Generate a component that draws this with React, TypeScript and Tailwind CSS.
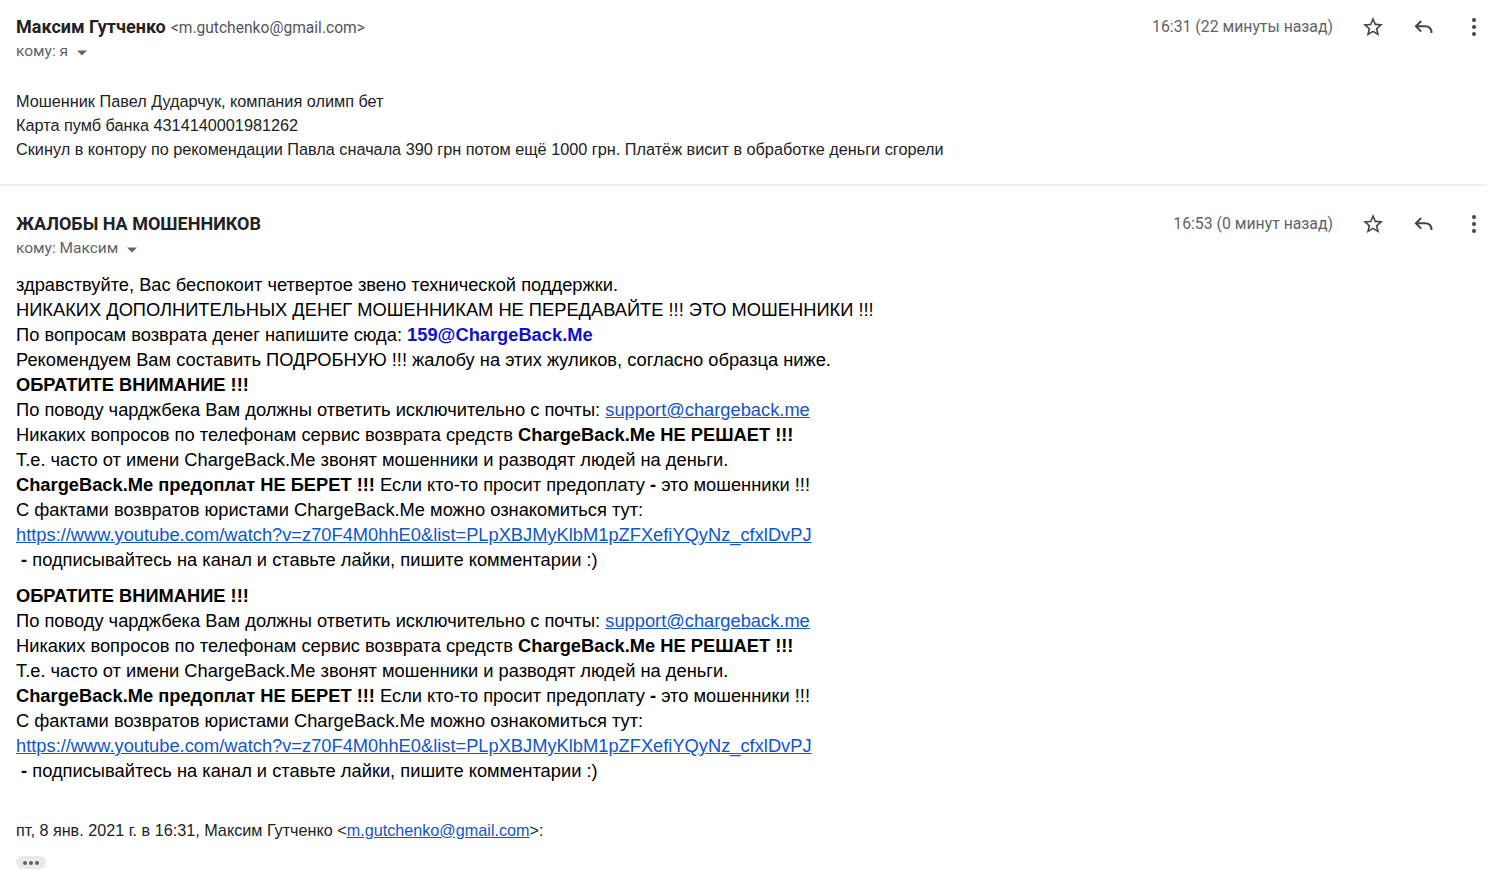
import React from "react";

const Star = () => (
  <svg width="24" height="24" viewBox="0 0 24 24" fill="#444">
    <path d="M22 9.24l-7.19-.62L12 2 9.19 8.63 2 9.24l5.46 4.73L5.82 21 12 17.27 18.18 21l-1.63-7.03L22 9.24zM12 15.4l-3.76 2.27 1-4.28-3.32-2.88 4.38-.38L12 6.1l1.71 4.04 4.38.38-3.32 2.88 1 4.28L12 15.4z" />
  </svg>
);
const Reply = () => (
  <svg width="24" height="24" viewBox="0 0 24 24">
    <path d="M4 11.3h9c4 0 6.5 2.6 6.5 6.7" fill="none" stroke="#444" strokeWidth="2" />
    <path d="M9.2 6l-5.3 5.3 5.3 5.3" fill="none" stroke="#444" strokeWidth="2" />
  </svg>
);
const More = () => (
  <svg width="24" height="24" viewBox="0 0 24 24" fill="#444">
    <circle cx="12" cy="5" r="2" />
    <circle cx="12" cy="12" r="2" />
    <circle cx="12" cy="19" r="2" />
  </svg>
);

const Caret = () => (
  <svg width="10" height="6" viewBox="0 0 10 5" className="ml-[9px] mt-[1px]">
    <path d="M0 0l5 5 5-5z" fill="#666" />
  </svg>
);

const Header = ({ name, email, to, time }: { name: string; email?: string; to: string; time: string }) => (
  <div className="flex items-start">
    <div className="flex-1">
      <div className="flex items-baseline h-[24px] leading-[24px]">
        <span className="text-[18px] font-bold text-[#222]">{name}</span>
        {email && <span className="ml-[5px] text-[15.6px] text-[#555]">{email}</span>}
      </div>
      <div className="flex items-center h-[24px] text-[15.5px] text-[#5f6368] mt-[1px]">
        <span>{to}</span>
        <Caret />
      </div>
    </div>
    <div className="flex items-center h-[24px]">
      <span className="text-[15.8px] text-[#5f6368] mr-[13px]">{time}</span>
      <div className="w-[51px] flex justify-center pl-[2px]"><Star /></div>
      <div className="w-[51px] flex justify-center pl-[2px]"><Reply /></div>
      <div className="w-[51px] flex justify-center"><More /></div>
    </div>
  </div>
);

const Lnk = ({ children }: { children: React.ReactNode }) => (
  <a className="text-[#15c] underline" href="#">{children}</a>
);

const Warn = () => (
  <div>
    <div className="font-bold">ОБРАТИТЕ ВНИМАНИЕ !!!</div>
    <div>По поводу чарджбека Вам должны ответить исключительно с почты: <Lnk>support@chargeback.me</Lnk></div>
    <div>Никаких вопросов по телефонам сервис возврата средств <b>ChargeBack.Me НЕ РЕШАЕТ !!!</b></div>
    <div>Т.е. часто от имени ChargeBack.Me звонят мошенники и разводят людей на деньги.</div>
    <div><b>ChargeBack.Me предоплат НЕ БЕРЕТ !!!</b> Если кто-то просит предоплату <b>-</b> это мошенники !!!</div>
    <div>С фактами возвратов юристами ChargeBack.Me можно ознакомиться тут:</div>
    <div><Lnk>https://www.youtube.com/watch?v=z70F4M0hhE0&amp;list=PLpXBJMyKlbM1pZFXefiYQyNz_cfxlDvPJ</Lnk></div>
    <div>&nbsp;<b>-</b> подписывайтесь на канал и ставьте лайки, пишите комментарии :)</div>
  </div>
);

export default function App() {
  return (
    <div className="w-[1503px] h-[887px] bg-white overflow-hidden" style={{ fontFamily: "Roboto, 'Liberation Sans', sans-serif" }}>
      <div className="pl-[16px] pr-[4px] pt-[15px]">
        <Header name="Максим Гутченко" email="<m.gutchenko@gmail.com>" to="кому: я" time="16:31 (22 минуты назад)" />
        <div className="mt-[25px] text-[16.25px] leading-[24px] text-[#222]" style={{ fontFamily: "'Liberation Sans', Arial, sans-serif" }}>
          <div>Мошенник Павел Дударчук, компания олимп бет</div>
          <div>Карта пумб банка 4314140001981262</div>
          <div>Скинул в контору по рекомендации Павла сначала 390 грн потом ещё 1000 грн. Платёж висит в обработке деньги сгорели</div>
        </div>
      </div>
      <div className="mt-[23px] mr-[16px] border-t-[2px] border-[#efefef]" />
      <div className="pl-[16px] pr-[4px] pt-[26px]">
        <Header name="ЖАЛОБЫ НА МОШЕННИКОВ" to="кому: Максим" time="16:53 (0 минут назад)" />
        <div className="mt-[11px] text-[18.3px] leading-[25px] text-black" style={{ fontFamily: "'Liberation Sans', Arial, sans-serif" }}>
          <div>здравствуйте, Вас беспокоит четвертое звено технической поддержки.</div>
          <div>НИКАКИХ ДОПОЛНИТЕЛЬНЫХ ДЕНЕГ МОШЕННИКАМ НЕ ПЕРЕДАВАЙТЕ !!! ЭТО МОШЕННИКИ !!!</div>
          <div>По вопросам возврата денег напишите сюда: <b className="text-[#1010cc]">159@ChargeBack.Me</b></div>
          <div>Рекомендуем Вам составить ПОДРОБНУЮ !!! жалобу на этих жуликов, согласно образца ниже.</div>
          <Warn />
          <div className="h-[11px]" />
          <Warn />
        </div>
        <div className="mt-[35px] text-[16.2px] leading-[24px] text-[#222]" style={{ fontFamily: "'Liberation Sans', Arial, sans-serif" }}>
          пт, 8 янв. 2021 г. в 16:31, Максим Гутченко &lt;<Lnk>m.gutchenko@gmail.com</Lnk>&gt;:
        </div>
        <div className="mt-[14px] w-[30px] h-[13px] rounded-full bg-[#e8eaed] flex items-center justify-center gap-[2px]">
          <span className="w-[4px] h-[4px] rounded-full bg-[#5f6368]" />
          <span className="w-[4px] h-[4px] rounded-full bg-[#5f6368]" />
          <span className="w-[4px] h-[4px] rounded-full bg-[#5f6368]" />
        </div>
      </div>
    </div>
  );
}
